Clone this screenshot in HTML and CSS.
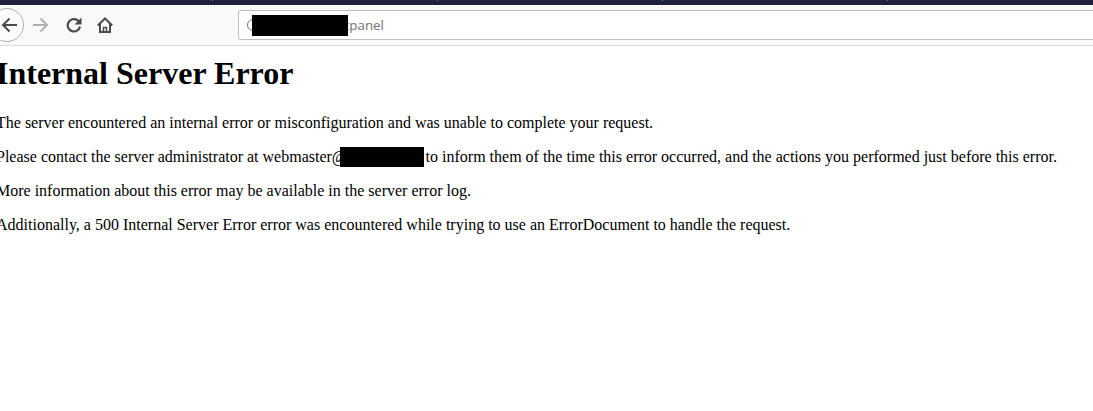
FILE: index.html
```html
<!DOCTYPE html>
<html lang="en">
<head>
<meta charset="utf-8">
<title>500 Internal Server Error</title>
<link rel="stylesheet" href="styles.css">
</head>
<body>
<div class="tabstrip">
  <span class="tab"></span>
  <span class="tab"></span>
  <span class="tab"></span>
  <span class="tab"></span>
</div>
<div class="toolbar">
  <span class="back">
    <svg width="16" height="16" viewBox="0 0 16 16" fill="none" stroke="#4a4a4f" stroke-width="2"><path d="M16 8H2M8.500 1.500 2 8l6.500 6.500"/></svg>
  </span>
  <span class="nav fwd">
    <svg width="16" height="16" viewBox="0 0 16 16" fill="none" stroke="#b1b1b3" stroke-width="2"><path d="M0 8h14M7.500 1.500 14 8l-6.500 6.500"/></svg>
  </span>
  <span class="nav reload">
    <svg width="16" height="16" viewBox="0 0 16 16" fill="none" stroke="#4a4a4f" stroke-width="2.200"><path d="M14 9.500A6.200 6.200 0 1 1 11.500 3.200L13 4.500"/><path d="M15.500 0.500v7h-7z" fill="#4a4a4f" stroke="none"/></svg>
  </span>
  <span class="nav home">
    <svg width="16" height="16" viewBox="0 0 16 16" fill="none" stroke="#4a4a4f" stroke-width="2"><path d="M0.800 8.500 8 1.500l7.200 7"/><path d="M3 7v8h10V7"/><path d="M6.500 15v-4.500h3V15" stroke-width="1.500"/></svg>
  </span>
  <div class="urlbar">
    <span class="site-circle"></span>
    <span class="url-mask"></span>
    <span class="url-text">cpanel</span>
  </div>
</div>
<main class="page">
  <h1>Internal Server Error</h1>
  <p>The server encountered an internal error or misconfiguration and was unable to complete your request.</p>
  <p>Please contact the server administrator at webmaster@<span class="mask"></span> to inform them of the time this error occurred, and the actions you performed just before this error.</p>
  <p>More information about this error may be available in the server error log.</p>
  <p>Additionally, a 500 Internal Server Error error was encountered while trying to use an ErrorDocument to handle the request.</p>
</main>
</body>
</html>
```

FILE: styles.css
```css
html, body {
  margin: 0;
  padding: 0;
  height: 100%;
  overflow: hidden;
  background: #fff;
}

.tabstrip {
  height: 5px;
  display: flex;
  align-items: flex-start;
  padding-left: 212px;
  gap: 224px;
  background: #1f2040;
}

.tab {
  flex: none;
  width: 1px;
  height: 1px;
  background: #6f7088;
}

.toolbar {
  height: 40px;
  display: flex;
  align-items: center;
  background: #f9f9fa;
  border-bottom: 1px solid #dcdcdc;
  overflow: hidden;
}

.back {
  flex: none;
  width: 34px;
  height: 34px;
  margin-left: -10px;
  display: flex;
  align-items: center;
  box-sizing: border-box;
  padding-left: 10px;
  border: 1px solid #b1b1b3;
  border-radius: 50%;
  background: #fbfbfb;
}

.nav {
  flex: none;
  display: flex;
}

.fwd { margin-left: 9px; }
.reload { margin-left: 17px; }
.home { margin-left: 15px; }

.urlbar {
  flex: none;
  width: 900px;
  height: 30px;
  margin-left: 125px;
  display: flex;
  align-items: center;
  box-sizing: border-box;
  padding-left: 8px;
  background: #fff;
  border: 1px solid #bebebe;
  border-radius: 2px;
  font: 13.300px "Open Sans", "Noto Sans", sans-serif;
  color: #737373;
}

.site-circle {
  flex: none;
  width: 12px;
  height: 12px;
  box-sizing: border-box;
  border: 1px solid #737373;
  border-radius: 50%;
}

.url-mask {
  flex: none;
  position: relative;
  z-index: 1;
  width: 96px;
  height: 21px;
  margin: 1px 0 0 -7px;
  background: #000;
}

.url-text {
  margin-left: -5px;
}

.page {
  margin-left: -4px;
  font: 16px/18px "Liberation Serif", "Times New Roman", serif;
  color: #000;
}

h1 {
  margin: 11px 0 25px;
  font-size: 32px;
  line-height: 32px;
  font-weight: bold;
}

p {
  margin: 0 0 16px;
  white-space: nowrap;
}

.mask {
  display: inline-block;
  width: 84px;
  height: 20px;
  margin: -2px -2px -2px -7px;
  vertical-align: -3px;
  background: #000;
}
```
